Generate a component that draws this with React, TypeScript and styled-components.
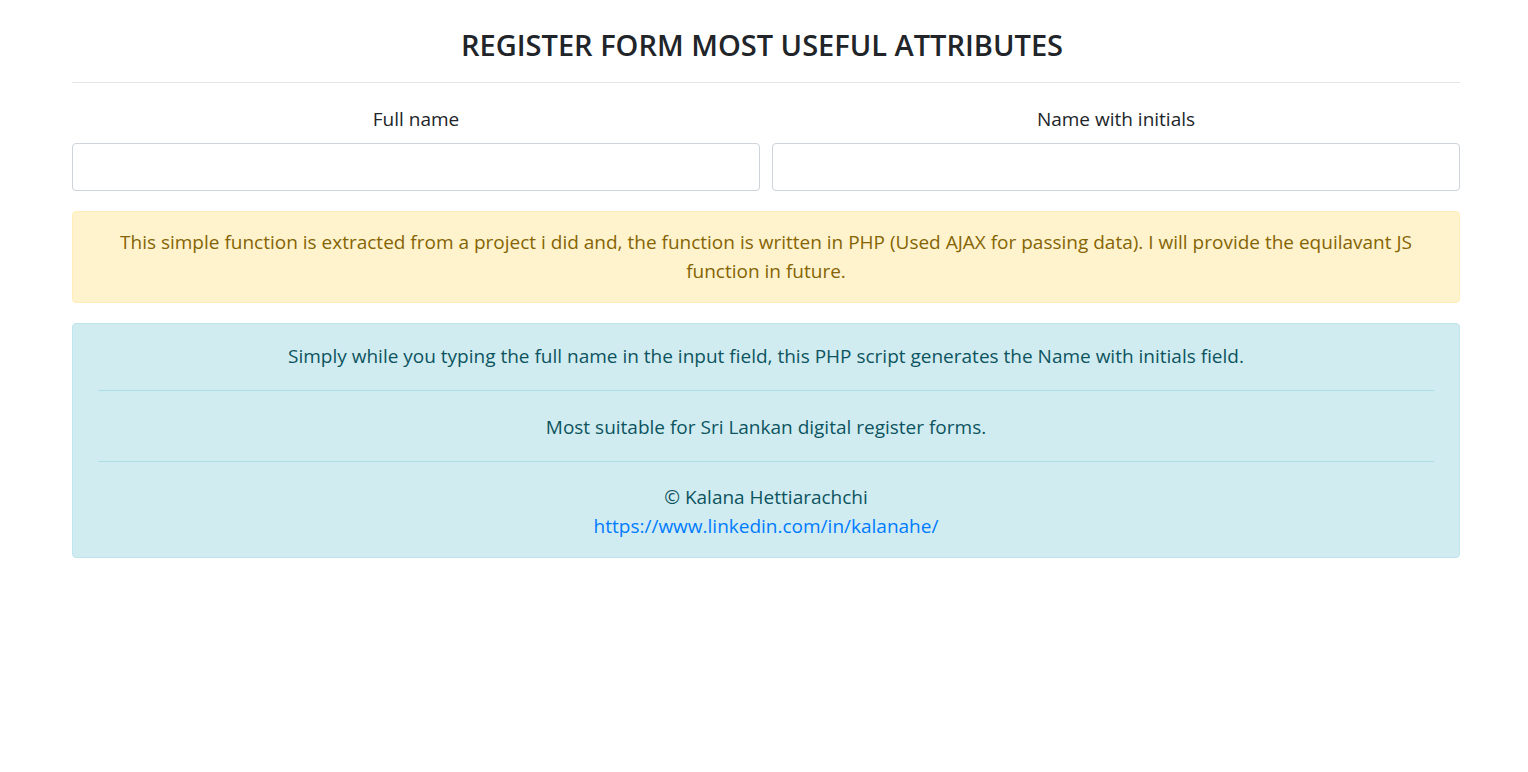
import React from "react";
import styled, { createGlobalStyle } from "styled-components";

const Global = createGlobalStyle`
  html, body { margin: 0; padding: 0; background: #fff; }
  body {
    font-family: "Open Sans", "Noto Sans", sans-serif;
    color: #212529;
    font-size: 19px;
    line-height: 29px;
  }
  * { box-sizing: border-box; }
`;

const Page = styled.div`
  padding: 28px 68px 0 72px;
`;

const Title = styled.h3`
  margin: 0;
  padding-right: 8px;
  text-align: center;
  font-size: 29px;
  font-weight: 600;
  line-height: 34px;
  color: #212529;
`;

const Rule = styled.hr`
  margin: 20px 0 23px;
  border: 0;
  border-top: 1px solid #e5e5e5;
`;

const FieldRow = styled.div`
  display: grid;
  grid-template-columns: 1fr 1fr;
  column-gap: 12px;
  margin-bottom: 20px;
`;

const Field = styled.div`
  display: flex;
  flex-direction: column;
  align-items: stretch;
`;

const Label = styled.label`
  text-align: center;
  line-height: 27px;
  margin-bottom: 10px;
`;

const Input = styled.input`
  height: 48px;
  border: 1px solid #ced4da;
  border-radius: 4px;
  padding: 0 16px;
  font: inherit;
  color: #495057;
  background: #fff;
  outline: none;
`;

const Alert = styled.div<{ $tone: "warning" | "info" }>`
  border-radius: 4px;
  text-align: center;
  margin-bottom: 20px;
  ${(p) =>
    p.$tone === "warning"
      ? `background:#fff3cd;border:1px solid #ffeeba;color:#856404;padding:16px 20px;`
      : `background:#d1ecf1;border:1px solid #bee5eb;color:#0c5460;padding:18px 25px 16px;`}
`;

const Para = styled.p`
  margin: 0;
`;

const AlertRule = styled.hr<{ $after: number }>`
  margin: 19px 0 ${(p) => p.$after}px;
  border: 0;
  border-top: 1px solid #abdde5;
`;

const Link = styled.a`
  color: #007bff;
  text-decoration: none;
`;

export default function App() {
  return (
    <>
      <Global />
      <Page>
        <Title>REGISTER FORM MOST USEFUL ATTRIBUTES</Title>
        <Rule />
        <FieldRow>
          <Field>
            <Label>Full name</Label>
            <Input type="text" />
          </Field>
          <Field>
            <Label>Name with initials</Label>
            <Input type="text" />
          </Field>
        </FieldRow>
        <Alert $tone="warning">
          This simple function is extracted from a project i did and, the function is written in PHP (Used
          AJAX for passing data). I will provide the equilavant JS function in future.
        </Alert>
        <Alert $tone="info">
          <Para>
            Simply while you typing the full name in the input field, this PHP script generates the Name with
            initials field.
          </Para>
          <AlertRule $after={22} />
          <Para>Most suitable for Sri Lankan digital register forms.</Para>
          <AlertRule $after={21} />
          <Para>© Kalana Hettiarachchi</Para>
          <Para>
            <Link href="#">https://www.linkedin.com/in/kalanahe/</Link>
          </Para>
        </Alert>
      </Page>
    </>
  );
}
